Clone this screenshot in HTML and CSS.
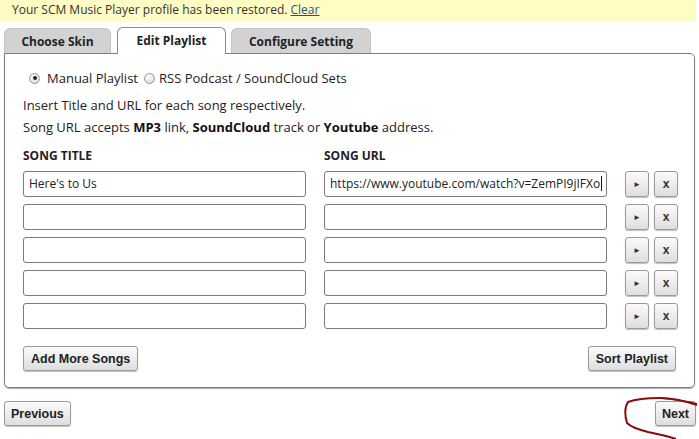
FILE: index.html
```html
<!DOCTYPE html>
<html>
<head>
<meta charset="utf-8">
<link rel="stylesheet" href="styles.css">
</head>
<body>
<div class="notice">Your SCM Music Player profile has been restored. <a href="#" class="clear">Clear</a></div>
<div class="tabs">
  <div class="tab tab-skin">Choose Skin</div>
  <div class="tab tab-active">Edit Playlist</div>
  <div class="tab tab-config">Configure Setting</div>
</div>
<div class="panel">
  <div class="radios">
    <label class="radio-label"><span class="radio checked"></span>Manual Playlist</label>
    <label class="radio-label second"><span class="radio"></span>RSS Podcast / SoundCloud Sets</label>
  </div>
  <p class="info">Insert Title and URL for each song respectively.<br>Song URL accepts <b>MP3</b> link, <b>SoundCloud</b> track or <b>Youtube</b> address.</p>
  <div class="grid">
    <div class="head">SONG TITLE</div>
    <div></div>
    <div class="head">SONG URL</div>
    <div></div><div></div><div></div><div></div>

    <div class="field">Here's to Us</div><div></div>
    <div class="field">https://www.youtube.com/watch?v=ZemPI9jIFXo<span class="caret"></span></div><div></div>
    <div class="btn sq">&#9658;</div><div></div><div class="btn sq x">x</div>

    <div class="field"></div><div></div><div class="field"></div><div></div>
    <div class="btn sq">&#9658;</div><div></div><div class="btn sq x">x</div>

    <div class="field"></div><div></div><div class="field"></div><div></div>
    <div class="btn sq">&#9658;</div><div></div><div class="btn sq x">x</div>

    <div class="field"></div><div></div><div class="field"></div><div></div>
    <div class="btn sq">&#9658;</div><div></div><div class="btn sq x">x</div>

    <div class="field"></div><div></div><div class="field"></div><div></div>
    <div class="btn sq">&#9658;</div><div></div><div class="btn sq x">x</div>
  </div>
  <div class="actions">
    <div class="btn">Add More Songs</div>
    <div class="btn">Sort Playlist</div>
  </div>
</div>
<div class="nav">
  <div class="btn navbtn">Previous</div>
  <div class="btn navbtn">Next</div>
</div>
<svg class="scribble" width="699" height="439" viewBox="0 0 699 439">
  <path d="M697 405 C685 401 672 398 660 398 C648 398 636 399 628 402 C624 408 625 416 627 423 C632 428 640 430 648 432 C658 434 668 436 676 439" fill="none" stroke="#8a0d0d" stroke-width="2"/>
  <path d="M660 398 C672 399 686 401 697 404" fill="none" stroke="#8a0d0d" stroke-width="1.5"/>
</svg>
</body>
</html>
```
FILE: styles.css
```css
* { box-sizing: border-box; }
html, body { margin: 0; padding: 0; background: #fff; }
body {
  width: 699px; height: 439px; overflow: hidden; position: relative;
  font-family: "Open Sans", "DejaVu Sans", sans-serif;
  font-size: 13px; color: #222;
}
.notice {
  height: 21px; margin-right: 3px;
  background: #fffcc4;
  padding: 0 0 0 12px;
  line-height: 20px; font-size: 12px; color: #333;
}
.clear { color: #1d4e9e; text-decoration: underline; }
.tabs {
  display: flex; align-items: flex-end;
  padding: 0 0 0 4px; height: 33px;
  position: relative; z-index: 2;
}
.tab {
  height: 25px; border-radius: 6px 6px 0 0;
  background: #d2d2d2; border: 1px solid #c4c4c4; border-bottom: none;
  font-weight: 700; font-size: 12px; color: #222;
  display: flex; align-items: center; justify-content: center;
  margin-right: 5px; margin-bottom: 1px;
}
.tab-skin { width: 107px; margin-right: 6px; }
.tab-active {
  width: 109px; height: 27px; background: #fff; border-color: #8a8a8a;
  margin-bottom: 0; padding-bottom: 1px;
}
.tab-config { width: 140px; }
.panel {
  margin: -1px 4px 0 4px; height: 335px;
  border: 1px solid #7e7e7e; border-radius: 0 5px 5px 5px;
  box-shadow: 0 1px 1px #aaa;
  padding: 13px 17px 0 18px;
  position: relative; z-index: 1;
}
.radios { display: flex; align-items: center; height: 22px; }
.radio-label { display: flex; align-items: center; color: #222; }
.radio {
  width: 11px; height: 11px; border-radius: 50%;
  border: 1px solid #9a9a9a;
  background: radial-gradient(circle at 40% 35%, #fff, #cfcfcf);
  margin: 0 7px 0 6px; position: relative;
}
.radio.checked::after {
  content: ""; position: absolute; left: 2.5px; top: 2.5px;
  width: 4px; height: 4px; border-radius: 50%; background: #222;
}
.second .radio { margin: 0 4px 0 6px; }
.info { margin: 5px 0 0 0; line-height: 22px; }
.info b { font-weight: 700; color: #111; }
.grid {
  display: grid;
  grid-template-columns: 283px 18px 283px 18px 24px 5px 24px;
  grid-template-rows: 18px;
  grid-auto-rows: 26px; row-gap: 7px;
  margin-top: 8px;
}
.head { font-weight: 700; font-size: 12px; align-self: center; color: #222; }
.field {
  border: 1px solid #7a7a7a; border-radius: 3px; background: #fff;
  padding: 0 5px; line-height: 24px; font-size: 12px; color: #222;
  white-space: nowrap; overflow: hidden;
}
.caret { display: inline-block; width: 1px; height: 15px; background: #111; vertical-align: -3px; margin-left: 1px; }
.btn {
  display: inline-flex; align-items: center; justify-content: center;
  height: 25px; padding: 0 7px;
  border: 1px solid #9a9a9a; border-radius: 3px;
  background: linear-gradient(#fbfbfb, #dedede);
  box-shadow: 0 1px 1px rgba(0,0,0,0.25);
  font-family: "Liberation Sans", Arial, sans-serif; font-weight: 700; font-size: 12.5px; color: #222;
}
.sq { height: 26px; padding: 0; font-size: 8px; color: #333; }
.sq.x { font-size: 12px; }
.actions {
  display: flex; justify-content: space-between;
  margin-top: 17px; padding-right: 1px;
}
.nav {
  display: flex; justify-content: space-between;
  padding: 13px 3px 0 4px;
}
.navbtn { padding: 0 6px; }
.scribble { position: absolute; left: 0; top: 0; pointer-events: none; z-index: 5; }
```
